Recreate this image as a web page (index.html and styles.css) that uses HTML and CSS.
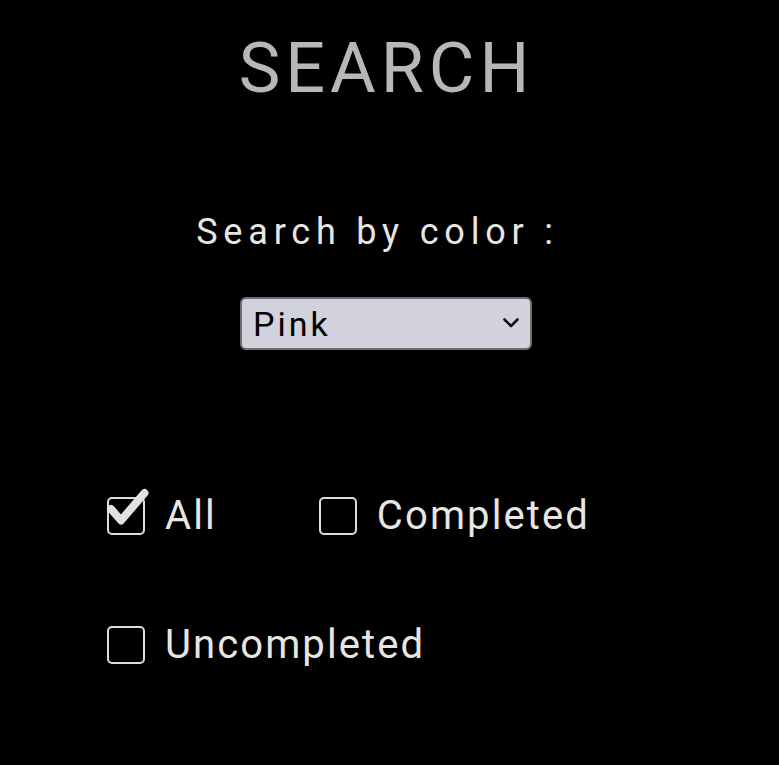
FILE: index.html
```html
<!DOCTYPE html>
<html lang="en">
<head>
<meta charset="utf-8">
<title>Search</title>
<link rel="stylesheet" href="styles.css">
</head>
<body>
<main class="page">
  <h1 class="title">SEARCH</h1>
  <label class="color-label" for="color">Search by color :</label>
  <div class="select-wrap">
    <select id="color" class="select">
      <option>Pink</option>
      <option>Red</option>
      <option>Blue</option>
      <option>Green</option>
    </select>
    <svg class="chevron" width="18" height="12" viewBox="0 0 18 12" aria-hidden="true"><path d="M2.5 2.5 L9 9 L15.5 2.5" fill="none" stroke="#111" stroke-width="2.6" stroke-linecap="round" stroke-linejoin="round"/></svg>
  </div>
  <div class="filters">
    <div class="row">
      <label class="check">
        <span class="box-wrap">
          <input type="checkbox" class="box" checked>
          <svg class="tick" width="38" height="38" viewBox="0 0 38 38" aria-hidden="true"><path d="M4 12 L14 23.5 L37.5 -4" fill="none" stroke="#e2e2e2" stroke-width="8" stroke-linecap="round" stroke-linejoin="round"/></svg>
        </span>
        <span class="text">All</span>
      </label>
      <label class="check check-completed">
        <span class="box-wrap"><input type="checkbox" class="box"></span>
        <span class="text">Completed</span>
      </label>
    </div>
    <div class="row">
      <label class="check">
        <span class="box-wrap"><input type="checkbox" class="box"></span>
        <span class="text">Uncompleted</span>
      </label>
    </div>
  </div>
</main>
</body>
</html>
```
FILE: styles.css
```css
html, body {
  margin: 0;
  padding: 0;
  background: #000;
}
body {
  font-family: Roboto, "Liberation Sans", sans-serif;
  color: #e8e6e3;
}
.page {
  display: flex;
  flex-direction: column;
  align-items: center;
  padding-top: 27px;
}
.title {
  margin: 0;
  font-size: 70px;
  font-weight: 400;
  line-height: 82px;
  letter-spacing: 5px;
  color: #b9b7b5;
  padding-right: 6px;
}
.color-label {
  margin-top: 102px;
  font-size: 36px;
  line-height: 42px;
  letter-spacing: 5.8px;
  padding-right: 24px;
}
.select-wrap {
  position: relative;
  margin-top: 44px;
  width: 292px;
  height: 53px;
  margin-right: 7px;
}
.select {
  appearance: none;
  -webkit-appearance: none;
  width: 100%;
  height: 100%;
  box-sizing: border-box;
  background: #d2d2dc;
  border: 2px solid #6e6e72;
  border-radius: 6px;
  font-family: Roboto, "Liberation Sans", sans-serif;
  font-size: 34px;
  letter-spacing: 3px;
  color: #000;
  padding: 0 0 0 11px;
  margin: 0;
}
.chevron {
  position: absolute;
  right: 12px;
  top: 20px;
  pointer-events: none;
}
.filters {
  align-self: stretch;
  margin-top: 142px;
  padding-left: 107px;
  display: flex;
  flex-direction: column;
  gap: 82px;
}
.row {
  display: flex;
  align-items: center;
  gap: 102px;
}
.check {
  display: flex;
  align-items: center;
  gap: 20px;
  font-size: 40px;
  line-height: 47px;
  letter-spacing: 2.1px;
}
.box-wrap {
  position: relative;
  width: 38px;
  height: 38px;
  flex: none;
}
.box {
  appearance: none;
  -webkit-appearance: none;
  display: block;
  margin: 0;
  width: 38px;
  height: 38px;
  box-sizing: border-box;
  border: 2px solid #dcdcdc;
  border-radius: 5px;
  background: transparent;
}
.tick {
  position: absolute;
  left: 0;
  top: 0;
  overflow: visible;
  pointer-events: none;
}
```
